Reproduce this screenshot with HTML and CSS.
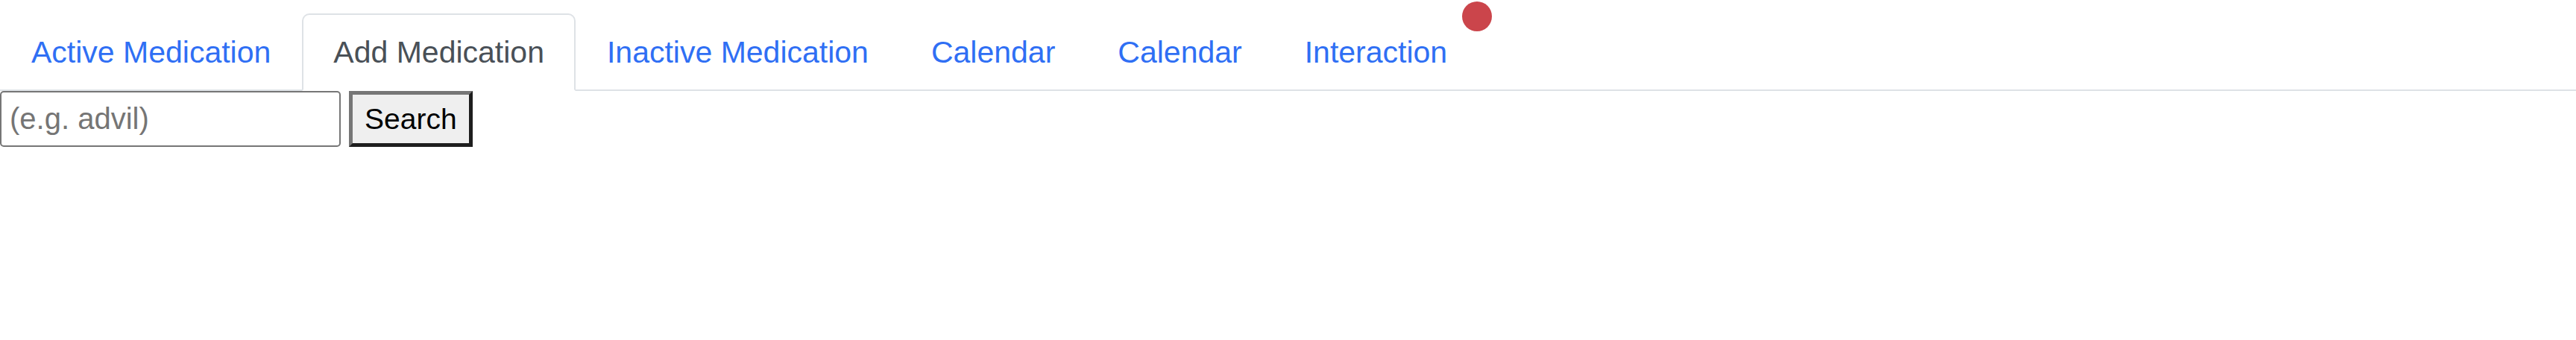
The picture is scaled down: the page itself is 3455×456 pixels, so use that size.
FILE: index.html
```html
<!DOCTYPE html>
<html lang="en">
<head>
<meta charset="utf-8">
<title>Medication</title>
<link rel="stylesheet" href="styles.css">
</head>
<body>
<ul class="nav-tabs">
  <li class="nav-item"><a class="nav-link" href="#">Active Medication</a></li>
  <li class="nav-item"><a class="nav-link active" href="#">Add Medication</a></li>
  <li class="nav-item"><a class="nav-link" href="#">Inactive Medication</a></li>
  <li class="nav-item"><a class="nav-link" href="#">Calendar</a></li>
  <li class="nav-item"><a class="nav-link" href="#">Calendar</a></li>
  <li class="nav-item"><a class="nav-link has-badge" href="#">Interaction<span class="dot"></span></a></li>
</ul>
<form class="search-form">
  <input class="search-input" type="text" placeholder="(e.g. advil)">
  <button class="search-btn" type="button">Search</button>
</form>
</body>
</html>
```
FILE: styles.css
```css
html, body {
  margin: 0;
  padding: 0;
  background: #fff;
}
body {
  font-family: "Liberation Sans", Arial, sans-serif;
}
.nav-tabs {
  display: flex;
  list-style: none;
  margin: 18px 0 0 0;
  padding: 0;
  border-bottom: 2px solid #dee2e6;
}
.nav-item {
  display: block;
}
.nav-link {
  position: relative;
  display: block;
  padding: 0 40px;
  line-height: 100px;
  font-size: 41px;
  color: #2f6ff4;
  text-decoration: none;
  border: 2px solid transparent;
  border-radius: 10px 10px 0 0;
  margin-bottom: -2px;
}
.nav-link.active {
  color: #495057;
  background: #fff;
  border-color: #dee2e6 #dee2e6 #fff;
}
.dot {
  position: absolute;
  top: 2px;
  left: 100%;
  width: 40px;
  height: 40px;
  border-radius: 50%;
  background: #cb454b;
  transform: translate(-50%, -50%);
}
.search-form {
  display: flex;
  align-items: flex-start;
  gap: 11px;
  margin: 0;
}
.search-input {
  box-sizing: border-box;
  width: 457px;
  height: 75px;
  margin: 0;
  padding: 0 11px;
  border: 2px solid #767676;
  border-radius: 5px;
  font-family: "Liberation Sans", Arial, sans-serif;
  font-size: 40px;
  color: #000;
  background: #fff;
  outline: none;
}
.search-input::placeholder {
  color: #757575;
}
.search-btn {
  box-sizing: border-box;
  height: 75px;
  margin: 0;
  padding: 0 16px;
  border-style: solid;
  border-width: 5px;
  border-color: #767676 #1e1e1e #1e1e1e #767676;
  background: #efefef;
  font-family: "Liberation Sans", Arial, sans-serif;
  font-size: 39px;
  color: #000;
  border-radius: 0;
}
```
